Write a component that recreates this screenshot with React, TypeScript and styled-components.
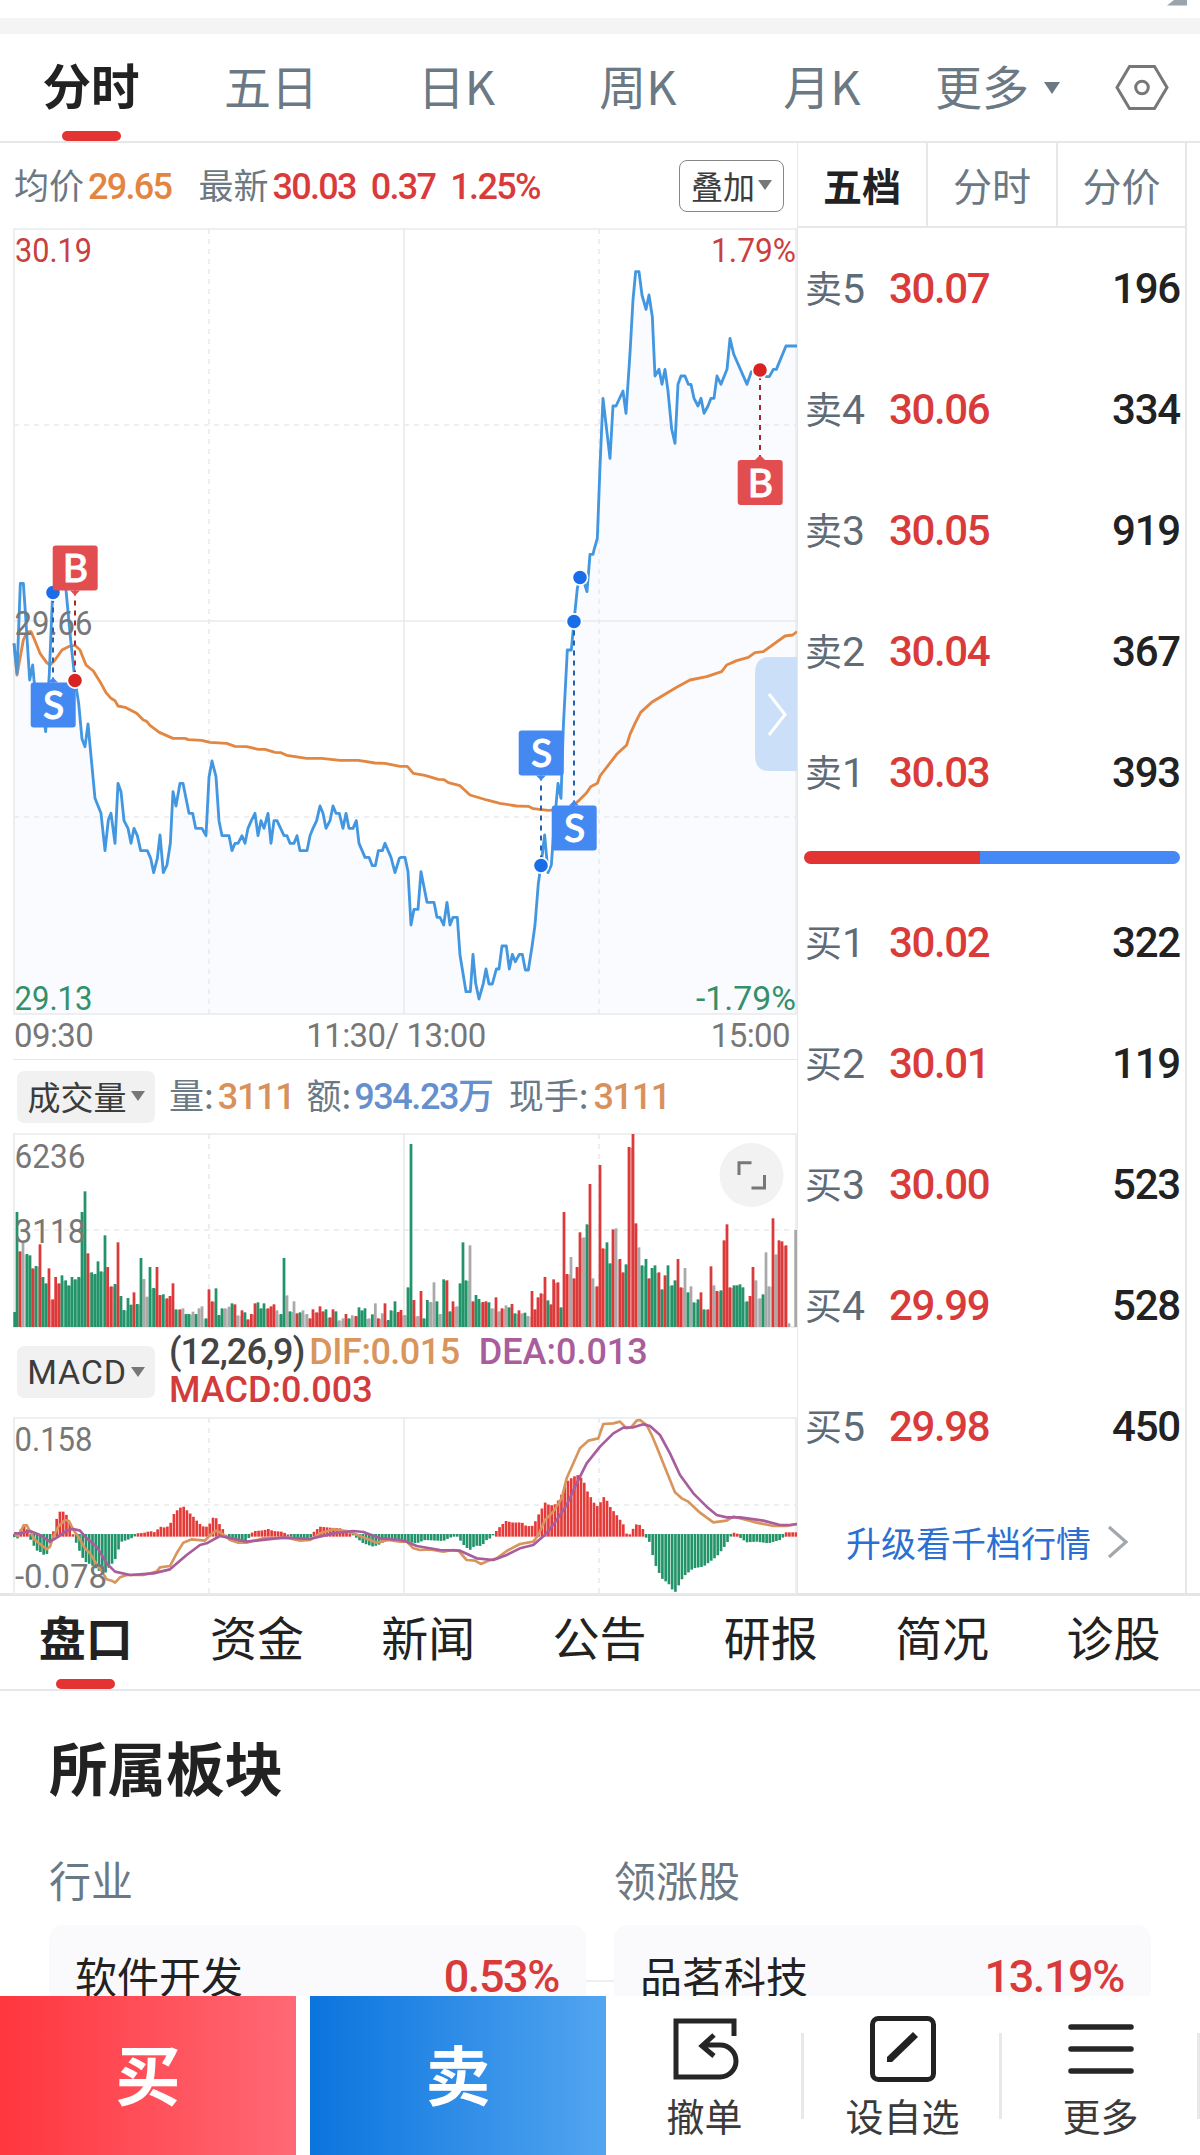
import React from 'react';
import styled, { createGlobalStyle } from 'styled-components';

const CJK = `'Noto Sans CJK SC', sans-serif`;
const NUM = `Roboto, 'Noto Sans CJK SC', sans-serif`;

const RED = '#d93b3b';
const SLATE = '#6b7984';
const INK = '#222222';
const RULE = '#e6e7e9';

const Global = createGlobalStyle`
  * { box-sizing: border-box; }
  body { margin: 0; background: #fff; }
`;

const Screen = styled.div`
  display: flex;
  flex-direction: column;
  width: 1200px;
  height: 2155px;
  overflow: hidden;
  background: #fff;
  color: ${INK};
  font-family: ${CJK};
  white-space: nowrap;
`;

/* ---------- header ---------- */

const TopStrip = styled.div`
  display: flex;
  justify-content: flex-end;
  flex: none;
  height: 34px;
  padding-right: 13px;
  border-bottom: 16px solid #f4f4f4;
`;

const PeriodBar = styled.nav`
  display: flex;
  flex: none;
  height: 109px;
  padding-left: 7px;
  border-bottom: 2px solid ${RULE};
`;

const PeriodTab = styled.div<{ $w: number; $active?: boolean }>`
  display: flex;
  flex-direction: column;
  align-items: center;
  justify-content: space-between;
  width: ${p => p.$w}px;
  font-size: ${p => (p.$active ? 48.5 : 47)}px;
  font-weight: ${p => (p.$active ? 700 : 400)};
  color: ${p => (p.$active ? INK : SLATE)};
  height: 107px;
`;

const TabLabel = styled.span<{ $h: number; $line?: number }>`
  height: ${p => p.$h}px;
  line-height: ${p => p.$line || p.$h}px;
`;

const Underline = styled.i`
  width: 59px;
  height: 10px;
  border-radius: 5px;
  background: #e33333;
`;

const MoreTab = styled.div`
  display: flex;
  align-items: center;
  gap: 15px;
  width: 180px;
  height: 107px;
  padding: 0 0 0 21px;
  font-size: 47px;
  color: ${SLATE};
`;

const GearSlot = styled.div`
  margin-left: 21px;
`;

const Caret = styled.i<{ $s: number; $c?: string }>`
  width: 0;
  height: 0;
  border: ${p => p.$s}px solid transparent;
  border-top: ${p => p.$s * 1.5}px solid ${p => p.$c || '#777'};
  border-bottom: 0;
`;

/* ---------- quote area ---------- */

const Main = styled.div`
  display: flex;
  flex: none;
  height: 1453px;
  padding-left: 13px;
  border-bottom: 3px solid #e4e5e6;
`;

const Charts = styled.section`
  display: flex;
  flex-direction: column;
  width: 784px;
`;

const InfoRow = styled.div`
  display: flex;
  align-items: center;
  height: 87px;
  padding: 0 13px 0 1px;
  font-size: 35px;
  color: ${SLATE};
`;

const Num = styled.span<{ $c: string; $size?: number; $ls?: number; $ml?: number; $w?: number }>`
  font-family: ${NUM};
  font-weight: ${p => p.$w || 500};
  font-size: ${p => p.$size || 36}px;
  line-height: 50px;
  padding-top: 1px;
  letter-spacing: ${p => p.$ls ?? -1.7}px;
  margin-left: ${p => p.$ml || 0}px;
  color: ${p => p.$c};
`;

const Lbl = styled.span<{ $ml?: number }>`
  margin-left: ${p => p.$ml || 0}px;
  padding-bottom: 5px;
  line-height: 50px;
`;

const OverlayButton = styled.button`
  display: flex;
  align-items: center;
  justify-content: center;
  gap: 3px;
  width: 105px;
  height: 52px;
  margin-left: auto;
  padding: 0 0 2px;
  border: 1.5px solid #868686;
  border-radius: 8px;
  background: #fff;
  font: 400 32px/46px ${CJK};
  color: #3c3c3c;
`;

const Svg = styled.svg`
  display: block;
  flex: none;
  overflow: visible;
`;

const TimeAxis = styled.div`
  display: grid;
  grid-template-columns: 1fr 1fr 1fr;
  height: 45px;
  border-bottom: 1px solid ${RULE};
  font: 400 33px/42px ${NUM};
  letter-spacing: -0.6px;
  color: #777;
`;

const AxisLabel = styled.span<{ $align: string; $left?: number; $right?: number }>`
  text-align: ${p => p.$align};
  padding: 0 ${p => p.$right || 0}px 0 ${p => p.$left || 0}px;
`;

const Afternoon = styled.span`
  margin-left: 8px;
`;

const StatRow = styled.div<{ $h: number }>`
  display: flex;
  align-items: center;
  height: ${p => p.$h}px;
  padding-left: 4px;
  font-size: 35px;
  color: ${SLATE};
`;

const Picker = styled.div<{ $font: string; $size: number; $ls?: number }>`
  display: flex;
  align-items: center;
  justify-content: center;
  gap: 4px;
  width: 138px;
  height: 52px;
  margin-right: 14px;
  padding-bottom: 1px;
  border-radius: 7px;
  background: #f1f1f1;
  font-family: ${p => p.$font};
  font-size: ${p => p.$size}px;
  letter-spacing: ${p => p.$ls || 0}px;
  line-height: 50px;
  color: #3c3c3c;
`;

const MacdText = styled.div`
  display: flex;
  flex-direction: column;
  height: 80px;
`;

const MacdLine = styled.div`
  display: flex;
  align-items: center;
  height: 38px;
`;

/* ---------- order book ---------- */

const Book = styled.aside`
  display: flex;
  flex-direction: column;
  width: 390px;
  border: solid ${RULE};
  border-width: 0 2px 0 1px;
`;

const BookTabs = styled.div`
  display: grid;
  grid-template-columns: 128px 130px 1fr;
  flex: none;
  height: 85px;
  border-bottom: 2px solid ${RULE};
`;

const BookTab = styled.div<{ $active?: boolean }>`
  text-align: center;
  font-size: 39px;
  line-height: 82px;
  font-weight: ${p => (p.$active ? 700 : 400)};
  color: ${p => (p.$active ? INK : SLATE)};
  & + & { border-left: 2px solid ${RULE}; }
`;

const Levels = styled.div`
  display: flex;
  flex-direction: column;
`;

const Level = styled.div`
  display: grid;
  grid-template-columns: 84px 1fr auto;
  align-items: center;
  height: 121px;
  padding: 0 5px 0 7px;
  font-family: ${NUM};
  font-size: 42px;
  font-weight: 500;
`;

const LevelName = styled.span`
  display: flex;
  align-items: center;
  font-weight: 400;
  font-size: 41px;
  color: #5f6c77;
`;

const LevelSide = styled.span`
  padding-bottom: 4px;
  font: 400 37px/54px ${CJK};
`;

const Price = styled.span`
  color: ${RED};
  letter-spacing: -1.4px;
`;

const Qty = styled.span`
  letter-spacing: -1.2px;
`;

const RatioBar = styled.div`
  display: flex;
  flex: none;
  height: 13px;
  margin: 18px 5px 18px 6px;
  border-radius: 7px;
  overflow: hidden;
`;

const RatioPart = styled.i<{ $grow: number; $c: string }>`
  flex: ${p => p.$grow};
  background: ${p => p.$c};
`;

const Upgrade = styled.a`
  display: flex;
  align-items: center;
  justify-content: center;
  gap: 16px;
  height: 100px;
  padding: 9px 8px 0 0;
  font-size: 35px;
  color: #2a6fd1;
`;

/* ---------- sections ---------- */

const SectionTabs = styled.nav`
  display: grid;
  grid-template-columns: repeat(7, 171.3px);
  flex: none;
  height: 95px;
  border-bottom: 2px solid ${RULE};
`;

const SectionTab = styled.div<{ $active?: boolean }>`
  display: flex;
  flex-direction: column;
  align-items: center;
  justify-content: space-between;
  font-size: 47px;
  font-weight: ${p => (p.$active ? 700 : 400)};
`;

const Sector = styled.section`
  flex: none;
  height: 305px;
  overflow: hidden;
  padding: 32px 49px 0;
`;

const Heading = styled.h2`
  margin: 0;
  font-size: 58.5px;
  line-height: 86px;
  font-weight: 700;
`;

const SectorGrid = styled.div`
  display: grid;
  grid-template-columns: 537px 28px 537px;
  margin-top: 41px;
`;

const SectorCaption = styled.div`
  height: 75px;
  line-height: 58px;
  font-size: 42px;
  color: ${SLATE};
`;

const SectorCard = styled.div`
  display: flex;
  align-items: center;
  justify-content: space-between;
  height: 112px;
  padding: 0 27px 14px 26px;
  border-radius: 14px;
  background: #fafafc;
  font-size: 42px;
`;

const CardValue = styled.span`
  padding-top: 5px;
  font: 500 45px/54px ${NUM};
  letter-spacing: -1.4px;
  color: ${RED};
`;

const Link = styled.div`
  height: 57px;
  border-bottom: 2px solid #eeeff0;
`;

/* ---------- bottom bar ---------- */

const ActionBar = styled.footer`
  display: flex;
  flex: none;
  height: 159px;
  background: #fff;
`;

const Trade = styled.button<{ $from: string; $to: string }>`
  width: 296px;
  margin-right: 14px;
  padding: 0 0 8px;
  border: 0;
  background: linear-gradient(90deg, ${p => p.$from}, ${p => p.$to});
  font: 700 65px/150px ${CJK};
  color: #fff;
  & + & { margin-right: 0; }
`;

const Action = styled.div<{ $w: number }>`
  display: flex;
  align-items: center;
  width: ${p => p.$w}px;
  &::after {
    content: '';
    width: 3px;
    height: 86px;
    background: #e8e8e8;
  }
`;

const ActionBody = styled.div`
  display: flex;
  flex: 1;
  flex-direction: column;
  align-items: center;
  gap: 3px;
  height: 159px;
  padding: 18px 0 0 2px;
  font-size: 38px;
  line-height: 55px;
  color: #3a3a3a;
`;

/* ---------- chart data: thirds of a pixel ---------- */

const PRICE =
  '42,310 51,400 61,130 70,130 76,215 89,420 98,375 102,420 115,520 128,500 137,575 148,400 158,157 168,120 178,60 188,120 198,150 213,310 225,420 236,490 246,597 255,620 264,552 285,775 303,820 315,932 325,840 333,820 345,910 354,730 363,755 372,842 384,865 393,910 402,865 412,887 422,932 442,932 452,955 461,998 472,955 480,885 490,998 501,975 511,910 519,755 528,798 540,730 549,730 567,820 578,820 587,865 606,865 618,887 627,712 636,663 648,710 657,842 666,887 687,887 696,932 705,910 714,910 726,887 735,910 744,865 754,842 765,820 774,887 783,842 792,865 804,820 813,910 822,842 831,842 852,887 861,887 870,910 882,910 891,887 900,932 921,932 930,887 939,865 950,842 960,798 969,820 978,865 990,842 999,798 1008,820 1018,820 1029,865 1038,820 1047,865 1059,865 1069,842 1077,910 1095,952 1107,952 1117,977 1126,977 1135,932 1147,932 1155,910 1173,952 1185,998 1198,955 1204,952 1215,952 1224,995 1233,1155 1242,1108 1254,1108 1263,995 1281,1087 1302,1087 1311,1132 1320,1132 1331,1155 1341,1087 1350,1155 1359,1132 1372,1132 1380,1245 1398,1355 1411,1355 1419,1243 1427,1330 1437,1377 1450,1330 1458,1287 1467,1332 1477,1332 1489,1287 1497,1287 1506,1218 1519,1218 1528,1287 1537,1243 1546,1265 1558,1243 1567,1243 1576,1290 1585,1290 1596,1220 1605,1155 1615,1030 1623,975 1634,885 1644,998 1654,975 1663,850 1674,730 1683,775 1690,560 1702,330 1714,330 1722,243 1732,145 1740,112 1750,120 1761,155 1770,43 1779,43 1782,30 1792,-5 1800,-220 1809,-425 1830,-245 1839,-402 1848,-402 1869,-447 1878,-380 1890,-560 1899,-720 1907,-805 1917,-805 1926,-735 1938,-692 1947,-735 1957,-670 1965,-492 1977,-512 1986,-467 1995,-512 2004,-447 2015,-333 2025,-290 2034,-467 2043,-492 2055,-492 2065,-467 2073,-467 2082,-425 2094,-402 2103,-425 2112,-380 2124,-402 2133,-425 2142,-425 2151,-492 2163,-467 2181,-512 2190,-605 2201,-558 2241,-467 2254,-505 2280,-510 2298,-490 2308,-490 2320,-512 2329,-512 2358,-582 2391,-582';

const AVERAGE =
  '42,310 51,405 70,300 82,275 93,275 104,300 120,340 140,368 150,375 165,360 186,330 205,320 225,316 240,330 258,375 280,393 300,425 318,458 333,475 345,482 354,498 375,502 410,520 430,540 440,544 450,556 478,577 519,595 555,595 565,599 605,601 630,607 680,610 705,619 740,620 775,628 795,628 825,637 843,638 860,646 920,655 965,655 1020,661 1075,661 1125,669 1155,670 1200,679 1222,679 1240,700 1275,706 1315,718 1332,719 1345,728 1380,737 1410,765 1460,780 1500,790 1550,798 1585,799 1600,806 1645,811 1700,808 1733,785 1760,758 1772,740 1792,730 1800,708 1850,643 1880,615 1890,583 1905,550 1922,517 1955,487 2000,460 2030,442 2070,420 2120,410 2165,395 2180,375 2210,362 2245,352 2265,338 2290,335 2355,288 2378,285 2391,275';

const VOLUME =
  '44g936 51g636 60r754 69a727 81g762 90g766 98r805 108g798 120r733 129g831 138g850 147r805 158r898 167r831 177r850 186g826 197g841 206g856 216g831 226g838 236g831 246g636 255g574 264r760 275g817 285g822 294g784 303g814 315g706 323r801 334r859 345g852 354r727 363g888 372g930 384g894 393g914 402r877 412g912 423g774 432a837 441a890 450g801 461g864 471r801 480r885 490g883 501r895 510r888 519r850 528g928 540r928 549a925 558g942 567g942 579a935 588g942 597a925 606a919 618g955 627r868 637r904 648g865 657g945 666g925 676a925 687a920 696g910 705r913 714a946 726r931 735g937 744r958 754r942 765r910 774g907 783g925 792g910 804r925 813r919 822r913 831a931 843g942 852g774 861a886 870g934 882a904 891r940 900g937 909a931 921a942 930r955 939r928 950r937 960r919 969r934 978g928 990r952 999r928 1008g934 1018a961 1029a955 1038r942 1047g955 1057a946 1068r948 1077g922 1086g931 1095g925 1107a955 1117g943 1126a910 1135r955 1147a940 1155r910 1165g960 1173g931 1185g904 1195r936 1203r930 1214a945 1224g862 1233g432 1242r900 1254a948 1263r873 1272g955 1282g900 1292a906 1302a847 1311g904 1321a942 1331g838 1341r841 1350g934 1359r904 1371a919 1380g850 1389g727 1398g841 1410a736 1419r904 1428g885 1437g897 1449r906 1458r904 1467g907 1477a925 1488r892 1498a934 1506r925 1518a916 1527g922 1536r912 1545g940 1557r931 1566a940 1575g938 1584a948 1596r873 1605r928 1614r892 1623r880 1635r831 1644g901 1653r913 1661r838 1674r847 1683g922 1692r636 1701r822 1713a771 1722r835 1731r801 1740r697 1752a712 1761g673 1770r552 1779a835 1791r859 1800r495 1809r745 1821g727 1830g790 1839r688 1848a685 1860r777 1869r817 1878g793 1887r441 1899r402 1908r670 1917a742 1926g796 1938g777 1947r835 1956g804 1965g796 1977r817 1986g868 1995r826 2004g796 2016g856 2025g841 2034r777 2043r862 2055a804 2064g877 2073a859 2082g907 2094g898 2103r877 2112g928 2124r928 2133r799 2142a856 2151r873 2163g871 2172r721 2181r673 2190r862 2202g856 2211g856 2220g853 2229g862 2241g904 2250r888 2259r801 2268a841 2280a895 2289g883 2298a757 2307a859 2319r655 2328a763 2337r721 2346r724 2358r736 2367a970 2387a690';

const HISTOGRAM =
  '42,-5 51,-15 60,10 69,35 80,25 90,-12 98,-22 106,-45 120,-50 138,-65 148,-35 156,-5 160,10 168,42 177,70 195,70 204,50 213,25 222,-10 232,-30 243,-60 255,-80 275,-90 300,-110 315,-115 325,-100 345,-75 355,-45 365,-20 390,-12 405,-4 408,5 430,6 450,12 465,8 480,25 497,22 510,30 519,60 535,78 549,87 560,75 580,55 597,35 615,22 627,30 638,52 650,50 657,35 670,15 680,-3 690,-10 715,-27 740,-25 752,5 765,12 790,14 805,18 820,12 845,10 862,3 870,-4 900,-15 930,-12 940,8 960,25 990,22 1020,20 1045,8 1065,-5 1090,-25 1120,-35 1140,-28 1160,-15 1200,-20 1210,-15 1230,-22 1250,-25 1275,-15 1330,-18 1350,-8 1370,-3 1380,-15 1395,-35 1410,-45 1425,-32 1445,-33 1460,-15 1475,-8 1483,5 1500,25 1518,42 1540,37 1565,38 1580,26 1600,28 1615,60 1636,98 1650,88 1665,92 1680,110 1700,160 1720,175 1735,180 1750,165 1760,135 1780,100 1790,85 1800,95 1810,115 1820,105 1830,85 1850,60 1870,32 1877,8 1886,-4 1897,15 1908,32 1920,30 1928,20 1936,-5 1948,-20 1964,-85 1985,-130 2005,-145 2024,-175 2034,-155 2050,-125 2080,-100 2110,-95 2130,-80 2150,-65 2170,-40 2190,-10 2198,8 2212,4 2220,-8 2240,-22 2270,-20 2305,-25 2340,-15 2352,-5 2358,8 2391,8';

const DIF =
  '42,640 55,648 70,618 80,615 90,635 105,660 120,672 140,688 150,680 158,655 175,620 195,600 207,603 220,630 235,650 255,685 270,700 285,725 300,745 320,778 335,782 345,788 360,772 380,765 430,765 470,755 480,742 510,738 530,700 550,668 575,658 615,662 630,645 648,632 665,640 690,660 715,668 740,668 790,655 860,653 900,662 930,660 960,640 1000,628 1050,635 1080,648 1130,668 1165,660 1200,665 1220,665 1240,685 1260,690 1290,688 1330,695 1360,690 1375,692 1400,720 1425,722 1443,732 1465,722 1490,715 1520,693 1560,672 1600,665 1615,645 1635,600 1660,575 1685,535 1700,475 1720,430 1740,385 1765,362 1795,355 1810,312 1840,310 1860,305 1880,325 1895,320 1910,302 1920,300 1940,315 1955,345 1970,380 2000,455 2025,517 2045,535 2065,545 2100,578 2140,607 2180,602 2200,590 2240,600 2270,608 2320,618 2360,618 2391,612';

const DEA =
  '42,640 60,640 90,633 120,645 150,665 175,650 200,632 220,627 240,632 260,655 290,680 320,730 345,755 390,765 460,760 510,748 560,705 600,675 620,670 660,648 740,665 850,653 930,657 1000,640 1060,633 1090,636 1140,655 1200,660 1220,665 1250,678 1320,690 1380,692 1430,715 1480,720 1520,705 1560,685 1600,675 1640,640 1670,600 1700,555 1730,490 1760,430 1800,380 1840,340 1870,323 1900,322 1930,313 1950,318 1980,345 2010,400 2040,465 2080,520 2120,560 2150,585 2180,592 2220,592 2290,602 2340,615 2370,615 2391,612';

const volumeBars = VOLUME.split(' ').map(t => {
  const m = /^(\d+)([gra])(\d+)$/.exec(t)!;
  return { x: +m[1], kind: m[2], top: +m[3] };
});
const barColor: Record<string, string> = { g: '#23946a', r: '#dc3a3a', a: '#a9a9a9' };
const paleColor: Record<string, string> = { g: '#7fc5a8', r: '#ee9292', a: '#cfcfcf' };

const envelope = HISTOGRAM.split(' ').map(p => p.split(',').map(Number));
const macdBars = Array.from({ length: 241 }, (_, i) => {
  const x = 43 + i * 9.77;
  let k = 1;
  while (k < envelope.length - 1 && envelope[k][0] < x) k++;
  const [x0, y0] = envelope[k - 1];
  const [x1, y1] = envelope[k];
  const t = Math.min(1, (x - x0) / (x1 - x0));
  return { x, v: y0 + (y1 - y0) * t };
});

/* ---------- chart pieces ---------- */

const ChartText = ({ x, y, w, c = '#777', children }: { x: number; y: number; w: number; c?: string; children: string }) => (
  <text x={x} y={y} textLength={w} lengthAdjust="spacingAndGlyphs" fontFamily="Roboto, sans-serif" fontSize="33.5" fill={c}>
    {children}
  </text>
);

const Grid = ({ top, bottom, mids, solid }: { top: number; bottom: number; mids: number[]; solid?: number }) => (
  <g stroke="#e9eaec" strokeWidth="1.6" fill="none">
    <path d={`M14 ${bottom}V${top}H796V${bottom}Z`} />
    <path d={`M404 ${top}V${bottom}`} />
    {solid && <path d={`M14 ${solid}H796`} />}
    <g strokeDasharray="5 5">
      <path d={`M209 ${top}V${bottom}M599 ${top}V${bottom}`} />
      {mids.map(m => <path key={m} d={`M14 ${m}H796`} />)}
    </g>
  </g>
);

type FlagProps = { side: 'B' | 'S'; x: number; box: number; dot: number };

const Flag = ({ side, x, box, dot }: FlagProps) => {
  const fill = side === 'B' ? '#e24d50' : '#4489f2';
  const line = side === 'B' ? '#a6282c' : '#2560ac';
  const below = box > dot;
  const edge = below ? box : box + 45;
  return (
    <g>
      <path d={`M${x} ${edge}V${dot}`} stroke={line} strokeWidth="2" strokeDasharray="5 5" />
      <circle cx={x} cy={dot} r="7.6" fill={side === 'B' ? '#d92323' : '#1a6de8'} stroke="#fff" strokeWidth="1.6" />
      <path d={below ? `M${x - 5} ${edge}l5-5 5 5z` : `M${x - 5} ${edge}l5 5 5-5z`} fill={fill} />
      <rect x={x - 22.3} y={box} width="45" height="45" rx="3" fill={fill} />
      <text x={x + 0.5} y={box + 36.5} textAnchor="middle" fontFamily="Lato, sans-serif" fontWeight="500" fontSize="39" fill="#fff" stroke="#fff" strokeWidth=".9">
        {side}
      </text>
    </g>
  );
};

const PriceChart = () => (
  <Svg width="784" height="786" viewBox="13 229 784 786">
    <g transform="translate(0 540) scale(.33333)">
      <path d={`M42,1422 L${PRICE} L2391,1422Z`} fill="#f9fbff" />
    </g>
    <Grid top={229} bottom={1014} mids={[425, 817]} solid={621} />
    <ChartText x={15} y={262} w={77} c="#c94040">30.19</ChartText>
    <ChartText x={711} y={262} w={85} c="#c94040">1.79%</ChartText>
    <ChartText x={14.5} y={1010} w={78} c="#33906a">29.13</ChartText>
    <ChartText x={696} y={1010} w={100} c="#33906a">-1.79%</ChartText>
    <g transform="translate(0 540) scale(.33333)" fill="none" strokeWidth="8.5" strokeLinejoin="round">
      <polyline points={AVERAGE} stroke="#e38642" />
      <polyline points={PRICE} stroke="#4397e0" />
    </g>
    <ChartText x={14.5} y={635} w={78}>29.66</ChartText>
    <path d="M797 657H769Q755 657 755 673V755Q755 771 769 771H797Z" fill="#cbe0f8" />
    <path d="M769 694l16 20.500-16 20.500" fill="none" stroke="#fff" strokeWidth="3" />
    <circle cx="580" cy="577.500" r="7.600" fill="#1a6de8" stroke="#fff" strokeWidth="1.600" />
    <Flag side="S" x={53} box={682.5} dot={592.5} />
    <Flag side="B" x={75} box={545.5} dot={680.5} />
    <Flag side="S" x={541} box={730.5} dot={865.5} />
    <Flag side="S" x={574} box={805.5} dot={621.5} />
    <Flag side="B" x={760} box={460} dot={370} />
  </Svg>
);

const VolumeChart = () => (
  <Svg width="784" height="193" viewBox="13 1134 784 193">
    <Grid top={1134} bottom={1327} mids={[1230]} />
    <g transform="translate(0 1000) scale(.33333)">
      {volumeBars.map((b, i) => {
        const next = volumeBars[i + 1];
        return (
          <React.Fragment key={b.x}>
            {next && i < volumeBars.length - 3 && (
              <rect x={b.x + 4} y={Math.max(b.top, next.top) + 2} width={Math.max(0, next.x - b.x - 7)} height={979 - Math.max(b.top, next.top)} fill={paleColor[b.kind]} />
            )}
            <path d={`M${b.x} 981V${b.top}`} stroke={barColor[b.kind]} strokeWidth="8.300" />
          </React.Fragment>
        );
      })}
    </g>
    <ChartText x={14.5} y={1168} w={71}>6236</ChartText>
    <ChartText x={14.5} y={1243} w={71}>3118</ChartText>
    <circle cx="751.500" cy="1175" r="32" fill="#f2f2f2" />
    <path d="M739 1175V1162.800H751.500M751.500 1188H764.500V1175" fill="none" stroke="#777" strokeWidth="3" />
  </Svg>
);

const MacdChart = () => (
  <Svg width="784" height="175" viewBox="13 1418 784 175">
    <Grid top={1418} bottom={1594} mids={[1505]} />
    <g transform="translate(0 1320) scale(.33333)">
      {macdBars.map(b => (
        <path key={b.x} d={b.v >= 0 ? `M${b.x} 650V${645 - b.v}` : `M${b.x} 642V${645 - b.v}`} stroke={b.v >= 0 ? '#e43a38' : '#23946a'} strokeWidth="8" />
      ))}
      <g fill="none" strokeWidth="8" strokeLinejoin="round">
        <polyline points={DIF} stroke="#d8955c" />
        <polyline points={DEA} stroke="#a95d9c" />
      </g>
    </g>
    <ChartText x={14.5} y={1451} w={78}>0.158</ChartText>
    <ChartText x={15} y={1588} w={92}>-0.078</ChartText>
  </Svg>
);

const asks = [['5', '30.07', '196'], ['4', '30.06', '334'], ['3', '30.05', '919'], ['2', '30.04', '367'], ['1', '30.03', '393']];
const bids = [['1', '30.02', '322'], ['2', '30.01', '119'], ['3', '30.00', '523'], ['4', '29.99', '528'], ['5', '29.98', '450']];

const LevelRows = ({ side, rows }: { side: string; rows: string[][] }) => (
  <Levels>
    {rows.map(([n, price, qty]) => (
      <Level key={n}>
        <LevelName><LevelSide>{side}</LevelSide>{n}</LevelName>
        <Price>{price}</Price>
        <Qty>{qty}</Qty>
      </Level>
    ))}
  </Levels>
);

const sections = ['盘口', '资金', '新闻', '公告', '研报', '简况', '诊股'];

export default function App() {
  return (
    <Screen>
      <Global />
      <TopStrip>
        <svg width="20" height="6" viewBox="0 0 20 6"><path d="M0 5.500L7 0H20V5.500Z" fill="#9ba3ab" /></svg>
      </TopStrip>
      <PeriodBar>
        <PeriodTab $w={168} $active>
          <TabLabel $h={97} $line={101}>分时</TabLabel>
          <Underline />
        </PeriodTab>
        <PeriodTab $w={192}><TabLabel $h={97} $line={101}>五日</TabLabel></PeriodTab>
        <PeriodTab $w={179}><TabLabel $h={97} $line={101}>日K</TabLabel></PeriodTab>
        <PeriodTab $w={184}><TabLabel $h={97} $line={101}>周K</TabLabel></PeriodTab>
        <PeriodTab $w={184}><TabLabel $h={97} $line={101}>月K</TabLabel></PeriodTab>
        <MoreTab><TabLabel $h={107} $line={102}>更多</TabLabel><Caret $s={8} $c={SLATE} /></MoreTab>
        <GearSlot>
          <Svg width="54" height="107" viewBox="0 0 54 107">
            <path d="M14.500 32.500H39.500L52 53.500L39.500 74.500H14.500L2 53.500Z" fill="none" stroke="#777" strokeWidth="3" />
            <circle cx="27" cy="53.500" r="6.300" fill="none" stroke="#777" strokeWidth="3" />
          </Svg>
        </GearSlot>
      </PeriodBar>

      <Main>
        <Charts>
          <InfoRow>
            <Lbl>均价</Lbl><Num $c="#e38540" $ml={4}>29.65</Num>
            <Lbl $ml={27}>最新</Lbl><Num $c={RED} $ml={4}>30.03</Num>
            <Num $c={RED} $ml={15}>0.37</Num>
            <Num $c={RED} $ml={15}>1.25%</Num>
            <OverlayButton>叠加<Caret $s={7} /></OverlayButton>
          </InfoRow>
          <PriceChart />
          <TimeAxis>
            <AxisLabel $align="left" $left={1}>09:30</AxisLabel>
            <AxisLabel $align="center" $right={18}>11:30/<Afternoon>13:00</Afternoon></AxisLabel>
            <AxisLabel $align="right" $right={7}>15:00</AxisLabel>
          </TimeAxis>
          <StatRow $h={74}>
            <Picker $font={CJK} $size={33}>成交量<Caret $s={7} /></Picker>
            <Lbl>量:</Lbl><Num $c="#d8915c" $ml={4} $ls={-1.3}>3111</Num>
            <Lbl $ml={12}>额:</Lbl><Num $c="#668fce" $ml={3} $ls={-1.4}>934.23万</Num>
            <Lbl $ml={16}>现手:</Lbl><Num $c="#d8915c" $ml={5} $ls={-1.3}>3111</Num>
          </StatRow>
          <VolumeChart />
          <StatRow $h={92}>
            <Picker $font={NUM} $size={34} $ls={0.8}>MACD<Caret $s={7} /></Picker>
            <MacdText>
              <MacdLine>
                <Num $c="#444" $ls={-0.9}>(12,26,9)</Num>
                <Num $c="#d8955c" $ml={5} $ls={-0.5}>DIF:0.015</Num>
                <Num $c="#a95d9c" $ml={19} $ls={0}>DEA:0.013</Num>
              </MacdLine>
              <MacdLine><Num $c="#d33c3c" $ls={0}>MACD:0.003</Num></MacdLine>
            </MacdText>
          </StatRow>
          <MacdChart />
        </Charts>

        <Book>
          <BookTabs>
            <BookTab $active>五档</BookTab>
            <BookTab>分时</BookTab>
            <BookTab>分价</BookTab>
          </BookTabs>
          <LevelRows side="卖" rows={asks} />
          <RatioBar>
            <RatioPart $grow={176} $c="#e33333" />
            <RatioPart $grow={200} $c="#4489f5" />
          </RatioBar>
          <LevelRows side="买" rows={bids} />
          <Upgrade>
            升级看千档行情
            <svg width="22" height="34" viewBox="0 0 22 34"><path d="M2 2L19 17L2 32" fill="none" stroke="#a2a7ad" strokeWidth="3.200" /></svg>
          </Upgrade>
        </Book>
      </Main>

      <SectionTabs>
        {sections.map((s, i) => (
          <SectionTab key={s} $active={i === 0}>
            <TabLabel $h={83} $line={80}>{s}</TabLabel>
            {i === 0 && <Underline />}
          </SectionTab>
        ))}
      </SectionTabs>

      <Sector>
        <Heading>所属板块</Heading>
        <SectorGrid>
          <SectorCaption>行业</SectorCaption>
          <span />
          <SectorCaption>领涨股</SectorCaption>
          <SectorCard>软件开发<CardValue>0.53%</CardValue></SectorCard>
          <Link />
          <SectorCard>品茗科技<CardValue>13.19%</CardValue></SectorCard>
        </SectorGrid>
      </Sector>

      <ActionBar>
        <Trade $from="#ff363e" $to="#ff6975">买</Trade>
        <Trade $from="#0a74de" $to="#53a5f0">卖</Trade>
        <Action $w={198}>
          <ActionBody>
            <svg width="68" height="70" viewBox="0 0 68 70">
              <path d="M63 22V7H5V63H49A16 16 0 0 0 49 31H31M43 21L31 32L43 42" fill="none" stroke="#262626" strokeWidth="5" />
            </svg>
            撤单
          </ActionBody>
        </Action>
        <Action $w={198}>
          <ActionBody>
            <svg width="68" height="70" viewBox="0 0 68 70">
              <rect x="3.500" y="4.500" width="61" height="61" rx="6" fill="none" stroke="#222" strokeWidth="5" />
              <path d="M18 48V43L44 18L49 23L23 48Z" fill="#222" />
            </svg>
            设自选
          </ActionBody>
        </Action>
        <Action $w={198}>
          <ActionBody>
            <svg width="68" height="70" viewBox="0 0 68 70">
              <path d="M4 13H64M4 35H64M4 57H64" stroke="#262626" strokeWidth="5.500" strokeLinecap="round" />
            </svg>
            更多
          </ActionBody>
        </Action>
      </ActionBar>
    </Screen>
  );
}
